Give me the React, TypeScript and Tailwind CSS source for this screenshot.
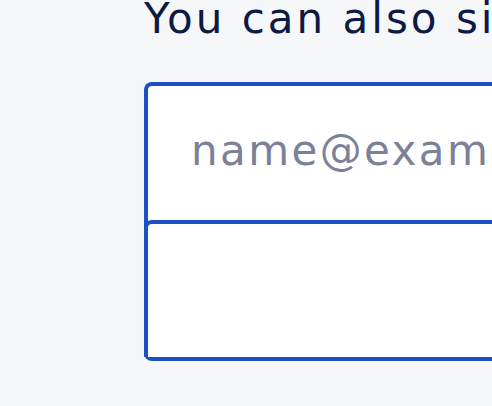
export default function App() {
  return (
    <div
      className="h-[406px] w-[492px] overflow-hidden bg-[#f6f7f9] pl-[144px]"
      style={{ fontFamily: '"DejaVu Sans", "Liberation Sans", sans-serif' }}
    >
      <h2 className="-mt-[5px] whitespace-nowrap text-[42px] leading-[48px] tracking-[3px] text-[#0c1a44]">
        You can also sign in with email
      </h2>
      <div className="mt-[39px] w-[600px] rounded-l-[8px] border-y-4 border-l-4 border-[#1b4fc4] bg-white">
        <div className="flex h-[134px] items-center pb-[5px] pl-[43px]">
          <input
            className="w-full bg-transparent text-[42px] tracking-[2.4px] text-[#0c1a44] outline-none placeholder:text-[#7b8199]"
            placeholder="name@example.com"
          />
        </div>
        <div className="-ml-1 h-[137px] rounded-tl-[8px] border-l-4 border-t-4 border-[#1b4fc4] bg-white" />
      </div>
    </div>
  );
}
